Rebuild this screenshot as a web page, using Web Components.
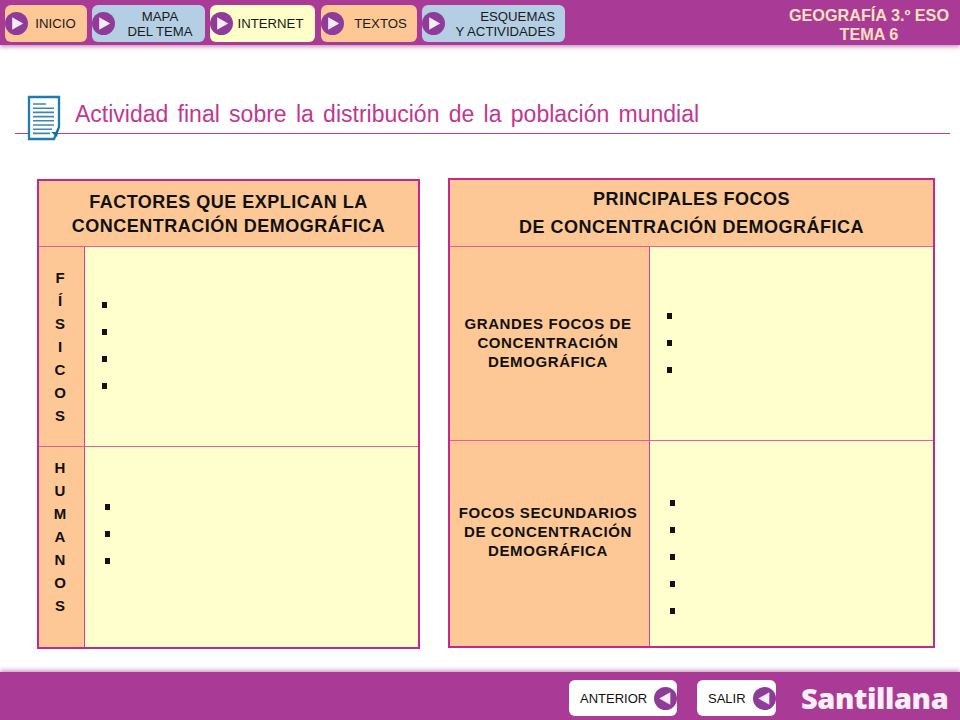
<!DOCTYPE html>
<html lang="es">
<head>
<meta charset="utf-8">
<title>Actividad final</title>
<style>
    html, body { margin: 0; padding: 0; background: #fff; }
    body { width: 960px; height: 720px; overflow: hidden; font-family: "Liberation Sans", Arial, sans-serif; }
    slide-page { display: flex; }
</style>
</head>
<body>
<slide-page>
    <top-bar slot="top">
        <nav-button color="#fdc896" width="82" trim="4">INICIO</nav-button>
        <nav-button color="#b4cfe4" width="113" trim="0">MAPA<br>DEL TEMA</nav-button>
        <nav-button color="#ffffc9" width="105" trim="7">INTERNET</nav-button>
        <nav-button color="#fdc896" width="96" trim="0" style="margin-left:1px">TEXTOS</nav-button>
        <nav-button color="#b4cfe4" width="143" trim="0" align="right">ESQUEMAS<br>Y ACTIVIDADES</nav-button>
    </top-bar>
    <page-title slot="title">Actividad final sobre la distribución de la población mundial</page-title>
    <data-panel slot="left" style="--w:383px;--h:470px;--head:66px;--side:46px;--row:200px;--mt:1px">
        <span slot="head">FACTORES QUE EXPLICAN LA<br>CONCENTRACIÓN DEMOGRÁFICA</span>
        <side-label slot="side1" vertical>FÍSICOS</side-label>
        <bullet-list slot="body1" count="4" left="17" top="55"></bullet-list>
        <side-label slot="side2" vertical up="22">HUMANOS</side-label>
        <bullet-list slot="body2" count="3" left="20" top="57"></bullet-list>
    </data-panel>
    <data-panel slot="right" style="--w:487px;--h:470px;--head:67px;--side:200px;--row:194px;--mt:0px;--lh:28px">
        <span slot="head">PRINCIPALES FOCOS<br>DE CONCENTRACIÓN DEMOGRÁFICA</span>
        <side-label slot="side1" up="2">GRANDES FOCOS DE<br>CONCENTRACIÓN<br>DEMOGRÁFICA</side-label>
        <bullet-list slot="body1" count="3" left="17" top="66"></bullet-list>
        <side-label slot="side2" up="24">FOCOS SECUNDARIOS<br>DE CONCENTRACIÓN<br>DEMOGRÁFICA</side-label>
        <bullet-list slot="body2" count="5" left="20" top="59"></bullet-list>
    </data-panel>
    <bottom-bar slot="bottom"></bottom-bar>
</slide-page>

<script>
const PURPLE = '#a93b97';

class SlidePage extends HTMLElement {
    constructor() {
        super();
        this.attachShadow({ mode: 'open' });
        this.shadowRoot.innerHTML = `
            <style>
                :host { display: flex; flex-direction: column; width: 960px; height: 720px; }
                main {
                    flex: 1;
                    display: flex;
                    justify-content: space-between;
                    padding: 44px 25px 0 37px;
                }
            </style>
            <slot name="top"></slot>
            <slot name="title"></slot>
            <main>
                <slot name="left"></slot>
                <slot name="right"></slot>
            </main>
            <slot name="bottom"></slot>
        `;
    }
}

class TopBar extends HTMLElement {
    constructor() {
        super();
        this.attachShadow({ mode: 'open' });
        this.shadowRoot.innerHTML = `
            <style>
                :host {
                    display: flex;
                    justify-content: space-between;
                    height: 45px;
                    background: ${PURPLE};
                    box-shadow: 0 2px 4px rgba(169, 59, 151, .55);
                    padding: 5px 6px 0 5px;
                    box-sizing: border-box;
                }
                nav { display: flex; gap: 5px; height: 37px; }
                div {
                    width: 170px;
                    margin-top: 1px;
                    color: #fde0bd;
                    font: bold 16.200px/19px "Liberation Sans", Arial, sans-serif;
                    text-align: center;
                    white-space: nowrap;
                }
            </style>
            <nav><slot></slot></nav>
            <div>GEOGRAFÍA 3.º ESO<br>TEMA 6</div>
        `;
    }
}

class NavButton extends HTMLElement {
    constructor() {
        super();
        this.attachShadow({ mode: 'open' });
    }

    connectedCallback() {
        const right = this.getAttribute('align') === 'right';
        this.shadowRoot.innerHTML = `
            <style>
                :host {
                    display: flex;
                    align-items: center;
                    box-sizing: border-box;
                    width: ${this.getAttribute('width')}px;
                    height: 37px;
                    border-radius: 6px;
                    background: ${this.getAttribute('color')};
                    color: #1a1a1a;
                    font: 13.200px/15px "Liberation Sans", Arial, sans-serif;
                    padding-right: ${right ? 10 : 0}px;
                }
                svg { flex: none; width: 23px; height: 23px; }
                span { flex: 1; text-align: ${right ? 'right' : 'center'}; padding-right: ${this.getAttribute('trim')}px; }
            </style>
            <svg viewBox="0 0 24 24"><circle cx="12" cy="12" r="12" fill="#8f3c98"/><path d="M7.5 5.5 19 12 7.5 18.500Z" fill="#f6ecf7"/></svg>
            <span><slot></slot></span>
        `;
    }
}

class PageTitle extends HTMLElement {
    constructor() {
        super();
        this.attachShadow({ mode: 'open' });
        this.shadowRoot.innerHTML = `
            <style>
                :host {
                    display: flex;
                    align-items: flex-start;
                    gap: 13px;
                    height: 89px;
                    margin: 0 10px 0 15px;
                    padding: 50px 0 0 11px;
                    box-sizing: border-box;
                    border-bottom: 1px solid #b8408f;
                    color: #c2378f;
                    font: 23px/38px "Liberation Sans", Arial, sans-serif;
                    word-spacing: 2.900px;
                }
                svg { flex: none; width: 36px; height: 46px; }
            </style>
            <svg viewBox="0 0 36 46">
                <path d="M3 2H33V32L28 44H3Z" fill="#fff" stroke="#1c7db5" stroke-width="2.300"/>
                <path d="M7 9H20M7 13.200H28M7 17.400H28M7 21.600H28M7 25.800H28M7 30H28M7 34.200H26M7 38.400H24" stroke="#3f86b5" stroke-width="1.600"/>
                <path d="M33.500 31 31 42 25 37 30 37Z" fill="#0e6fa8"/>
            </svg>
            <span><slot></slot></span>
        `;
    }
}

class DataPanel extends HTMLElement {
    constructor() {
        super();
        this.attachShadow({ mode: 'open' });
        this.shadowRoot.innerHTML = `
            <style>
                :host {
                    display: grid;
                    box-sizing: border-box;
                    width: var(--w);
                    height: var(--h);
                    margin-top: var(--mt);
                    border: 2px solid #c4288c;
                    grid-template-columns: var(--side) 1fr;
                    grid-template-rows: var(--head) var(--row) 1fr;
                    background: #ffffcd;
                }
                .head {
                    grid-column: 1 / 3;
                    display: flex;
                    align-items: center;
                    justify-content: center;
                    text-align: center;
                    background: #fdc896;
                    border-bottom: 1px solid #e8608f;
                    color: #111;
                    font: bold 18px/var(--lh, 24px) "Liberation Sans", Arial, sans-serif;
                    letter-spacing: .5px;
                }
                .side {
                    display: flex;
                    background: #fdc896;
                    border-right: 1px solid #d8408f;
                }
                .side.a, .body.a { border-bottom: 1px solid #e8608f; }
                .body { min-width: 0; }
            </style>
            <div class="head"><slot name="head"></slot></div>
            <div class="side a"><slot name="side1"></slot></div>
            <div class="body a"><slot name="body1"></slot></div>
            <div class="side"><slot name="side2"></slot></div>
            <div class="body"><slot name="body2"></slot></div>
        `;
    }
}

class SideLabel extends HTMLElement {
    constructor() {
        super();
        this.attachShadow({ mode: 'open' });
    }

    connectedCallback() {
        const vertical = this.hasAttribute('vertical');
        let content = '<slot></slot>';
        if (vertical) {
            content = [...this.textContent].map(c => `<b>${c}</b>`).join('');
        }
        this.shadowRoot.innerHTML = `
            <style>
                :host {
                    flex: 1;
                    display: flex;
                    flex-direction: column;
                    align-items: center;
                    justify-content: center;
                    text-align: center;
                    color: #111;
                    font: bold 15px/${vertical ? 23 : 19}px "Liberation Sans", Arial, sans-serif;
                    letter-spacing: ${vertical ? 0 : .6}px;
                    padding-right: 3px;
                    padding-bottom: ${this.getAttribute('up') || 0}px;
                }
                b { display: block; }
            </style>
            ${content}
        `;
        if (vertical) this.textContent = '';
    }
}

class BulletList extends HTMLElement {
    constructor() {
        super();
        this.attachShadow({ mode: 'open' });
    }

    connectedCallback() {
        const count = Number(this.getAttribute('count'));
        this.shadowRoot.innerHTML = `
            <style>
                :host {
                    display: flex;
                    flex-direction: column;
                    gap: 21px;
                    padding-left: ${this.getAttribute('left')}px;
                    padding-top: ${this.getAttribute('top')}px;
                }
                i { display: block; width: 5px; height: 6px; background: #111; }
            </style>
            ${'<i></i>'.repeat(count)}
        `;
    }
}

class BottomBar extends HTMLElement {
    constructor() {
        super();
        this.attachShadow({ mode: 'open' });
        this.shadowRoot.innerHTML = `
            <style>
                :host {
                    display: flex;
                    align-items: flex-start;
                    height: 48px;
                    box-sizing: border-box;
                    background: ${PURPLE};
                    box-shadow: 0 -2px 4px rgba(169, 59, 151, .5);
                    padding: 8px 0 0 569px;
                    gap: 20px;
                }
                .word {
                    margin-left: 5px;
                    color: #fbeef5;
                    font: 800 29px/36px "Open Sans", sans-serif;
                    letter-spacing: -.4px;
                }
            </style>
            <back-button width="108">ANTERIOR</back-button>
            <back-button width="79">SALIR</back-button>
            <span class="word">Santillana</span>
        `;
    }
}

class BackButton extends HTMLElement {
    constructor() {
        super();
        this.attachShadow({ mode: 'open' });
    }

    connectedCallback() {
        this.shadowRoot.innerHTML = `
            <style>
                :host {
                    display: flex;
                    align-items: center;
                    justify-content: space-between;
                    box-sizing: border-box;
                    width: ${this.getAttribute('width')}px;
                    height: 36px;
                    border-radius: 6px;
                    background: #fff;
                    color: #111;
                    font: 13px "Liberation Sans", Arial, sans-serif;
                    padding: 0 0 0 11px;
                }
                svg { flex: none; width: 23px; height: 23px; }
            </style>
            <span><slot></slot></span>
            <svg viewBox="0 0 24 24"><circle cx="12" cy="12" r="12" fill="#8f3c98"/><path d="M17 5.500 5.500 12 17 18.500Z" fill="#f6ecf7"/></svg>
        `;
    }
}

customElements.define('slide-page', SlidePage);
customElements.define('top-bar', TopBar);
customElements.define('nav-button', NavButton);
customElements.define('page-title', PageTitle);
customElements.define('data-panel', DataPanel);
customElements.define('side-label', SideLabel);
customElements.define('bullet-list', BulletList);
customElements.define('bottom-bar', BottomBar);
customElements.define('back-button', BackButton);
</script>
</body>
</html>
